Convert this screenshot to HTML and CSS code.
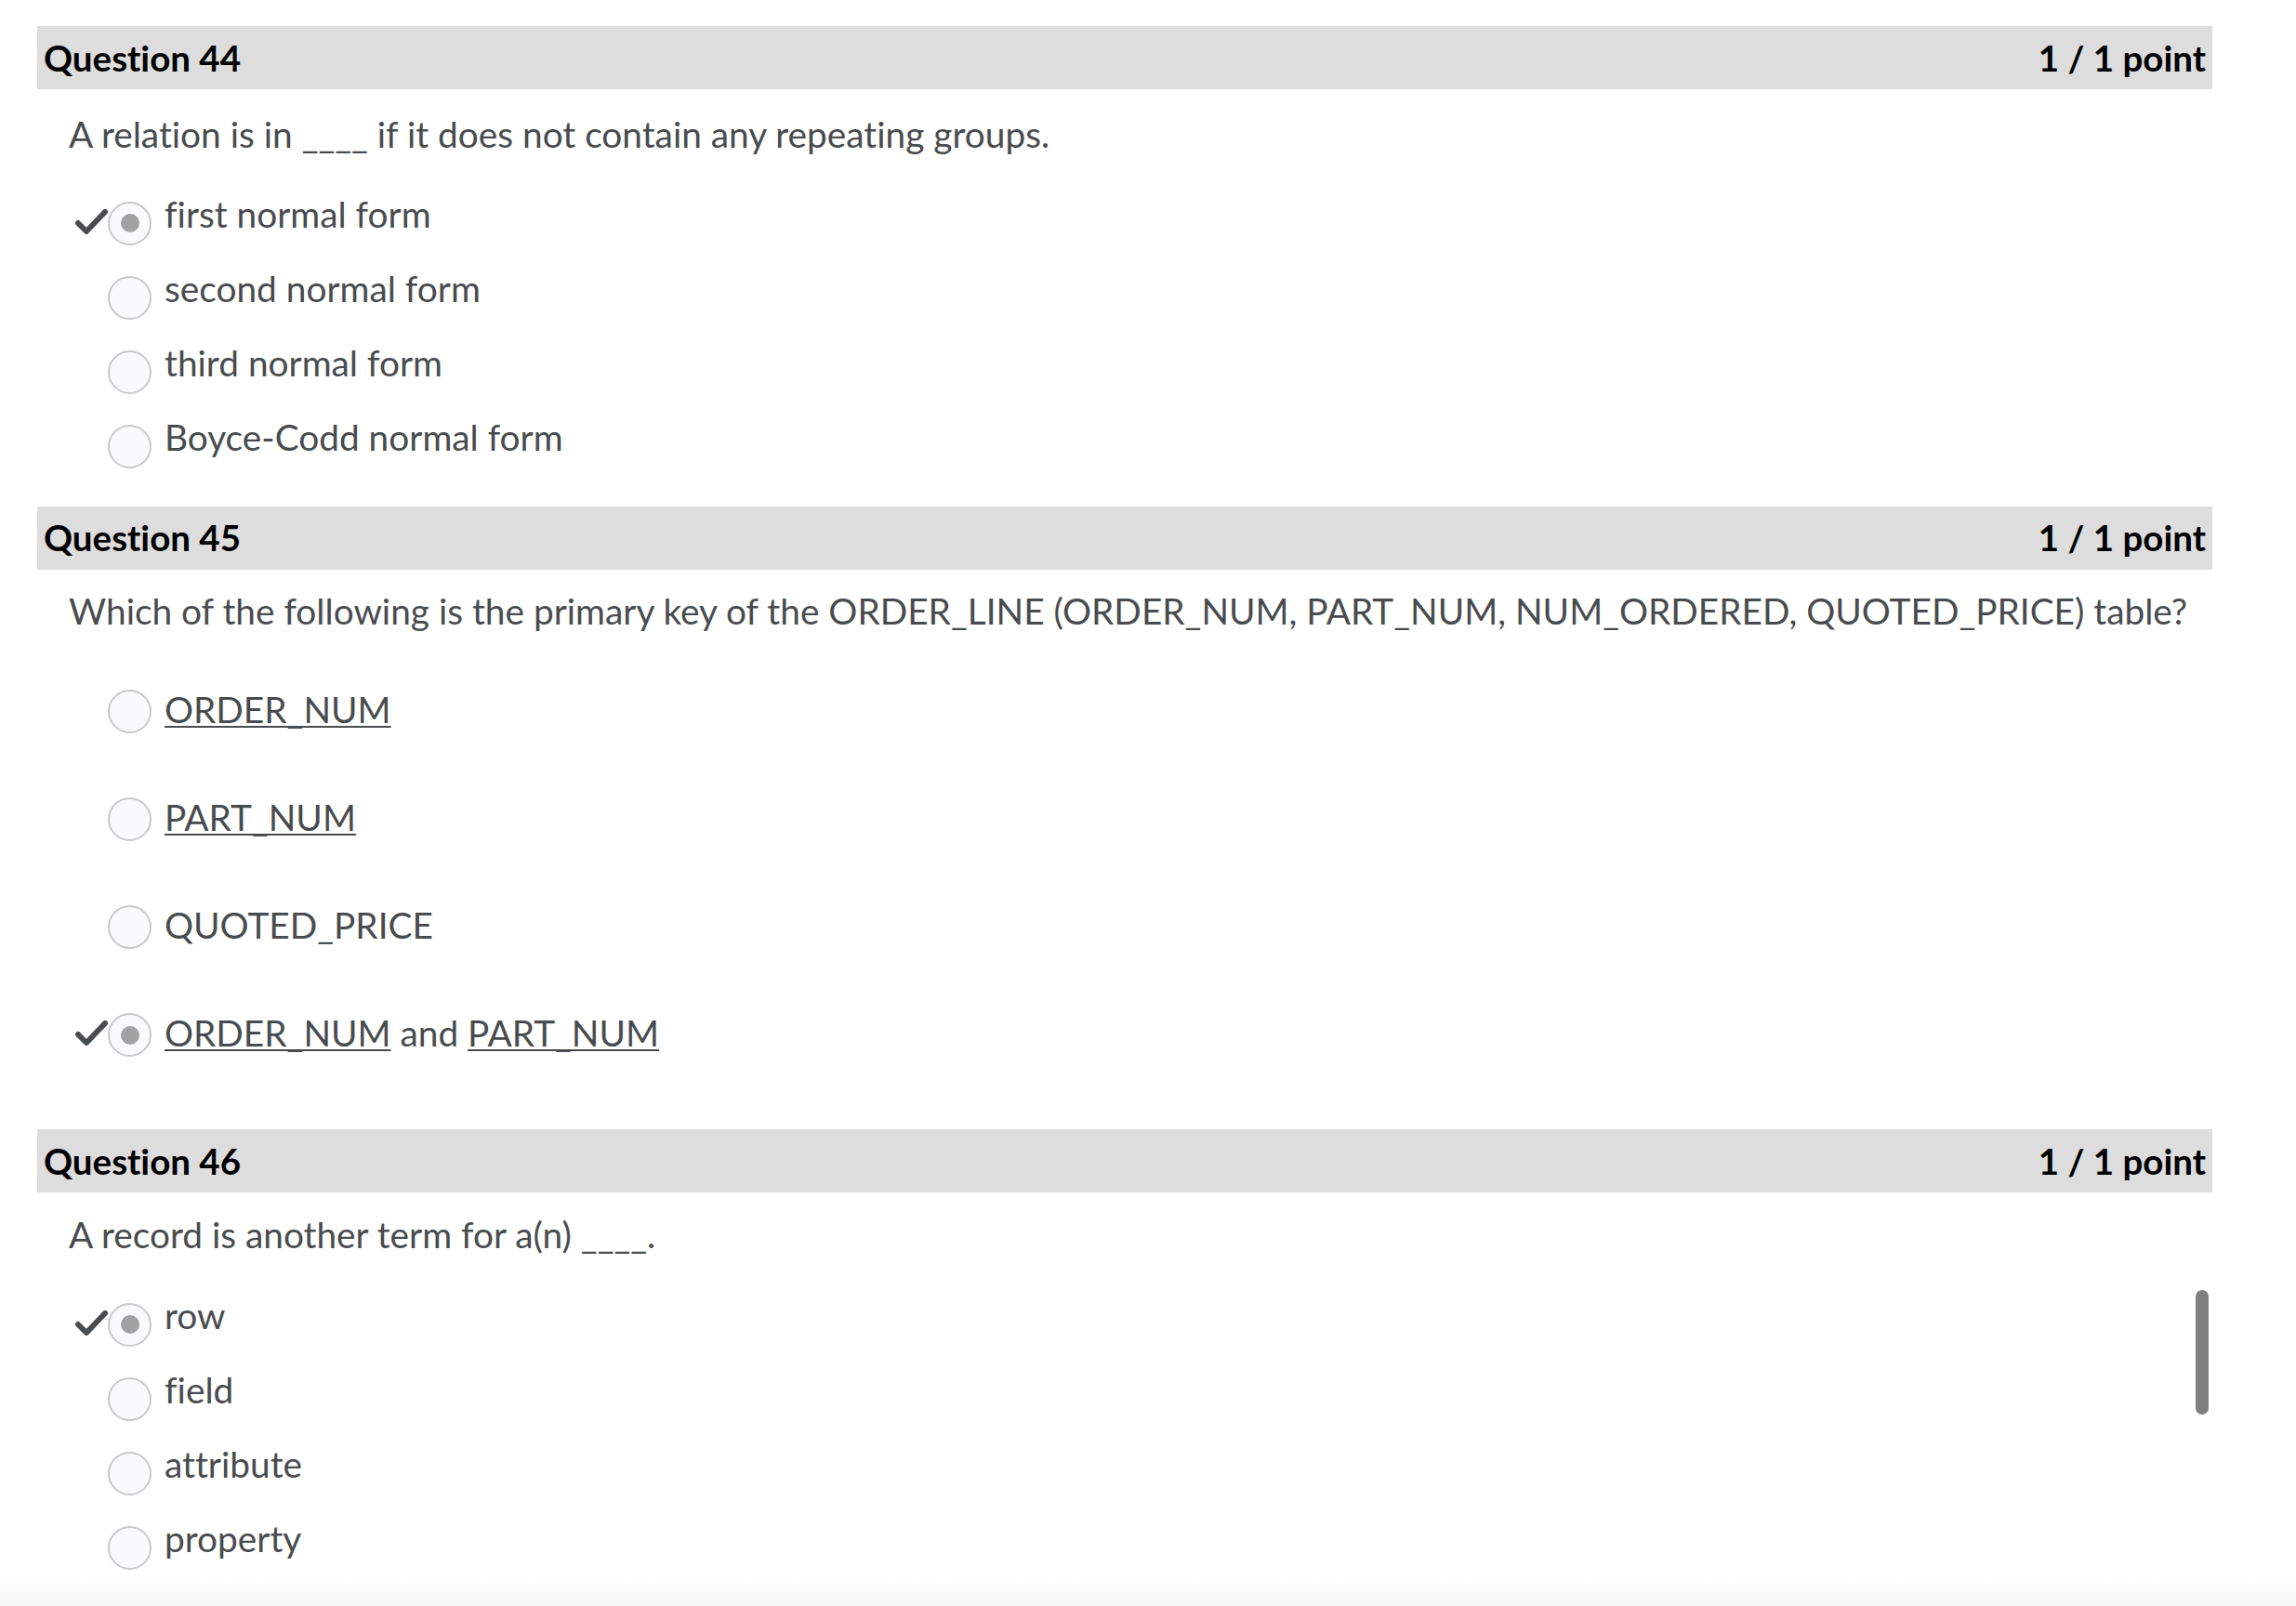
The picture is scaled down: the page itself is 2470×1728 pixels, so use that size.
FILE: index.html
```html
<!DOCTYPE html>
<html lang="en">
<head>
<meta charset="utf-8">
<title>Quiz review</title>
<link rel="stylesheet" href="styles.css">
</head>
<body>
<main class="quiz">
  <section class="question q44">
    <header class="q-head"><h2 class="q-title">Question 44</h2><span class="q-score">1 / 1 point</span></header>
    <p class="q-text">A relation is in ____ if it does not contain any repeating groups.</p>
    <ul class="options">
      <li class="option"><span class="control"><span class="check"><svg viewBox="0 0 36 30" width="36" height="30"><polyline points="4,15 13,24 33,3" /></svg></span><span class="radio selected"></span></span><span class="label">first normal form</span></li>
      <li class="option"><span class="control"><span class="check"></span><span class="radio"></span></span><span class="label">second normal form</span></li>
      <li class="option"><span class="control"><span class="check"></span><span class="radio"></span></span><span class="label">third normal form</span></li>
      <li class="option"><span class="control"><span class="check"></span><span class="radio"></span></span><span class="label">Boyce-Codd normal form</span></li>
    </ul>
  </section>

  <section class="question q45">
    <header class="q-head"><h2 class="q-title">Question 45</h2><span class="q-score">1 / 1 point</span></header>
    <p class="q-text">Which of the following is the primary key of the ORDER_LINE (ORDER_NUM, PART_NUM, NUM_ORDERED, QUOTED_PRICE) table?</p>
    <ul class="options tall">
      <li class="option"><span class="control"><span class="check"></span><span class="radio"></span></span><span class="label"><a class="link" href="#">ORDER_NUM</a></span></li>
      <li class="option"><span class="control"><span class="check"></span><span class="radio"></span></span><span class="label"><a class="link" href="#">PART_NUM</a></span></li>
      <li class="option"><span class="control"><span class="check"></span><span class="radio"></span></span><span class="label">QUOTED_PRICE</span></li>
      <li class="option"><span class="control"><span class="check"><svg viewBox="0 0 36 30" width="36" height="30"><polyline points="4,15 13,24 33,3" /></svg></span><span class="radio selected"></span></span><span class="label"><a class="link" href="#">ORDER_NUM</a> and <a class="link" href="#">PART_NUM</a></span></li>
    </ul>
  </section>

  <section class="question q46">
    <header class="q-head"><h2 class="q-title">Question 46</h2><span class="q-score">1 / 1 point</span></header>
    <p class="q-text">A record is another term for a(n) ____.</p>
    <ul class="options">
      <li class="option"><span class="control"><span class="check"><svg viewBox="0 0 36 30" width="36" height="30"><polyline points="4,15 13,24 33,3" /></svg></span><span class="radio selected"></span></span><span class="label">row</span></li>
      <li class="option"><span class="control"><span class="check"></span><span class="radio"></span></span><span class="label">field</span></li>
      <li class="option"><span class="control"><span class="check"></span><span class="radio"></span></span><span class="label">attribute</span></li>
      <li class="option"><span class="control"><span class="check"></span><span class="radio"></span></span><span class="label">property</span></li>
    </ul>
  </section>
</main>
<div class="scroll-thumb"></div>
<div class="bottom-fade"></div>
</body>
</html>
```

FILE: styles.css
```css
html, body {
  margin: 0;
  padding: 0;
  overflow: hidden;
  background: #ffffff;
}

body {
  font-family: Lato, "Open Sans", "Liberation Sans", sans-serif;
  font-variant-ligatures: none;
  color: #494c4e;
  height: 1728px;
}

.quiz {
  width: 2340px;
  margin-left: 40px;
  padding-top: 28px;
}

.q-head {
  display: flex;
  align-items: center;
  justify-content: space-between;
  height: 68px;
  padding: 0 7px;
  background: #dddddd;
  color: #000000;
  font-weight: 700;
  font-size: 38.5px;
  line-height: 1.2;
}

.q-title {
  margin: 0;
  font-size: inherit;
  font-weight: inherit;
}

.q-text {
  margin: 22px 0 0 34px;
  font-size: 38.8px;
  line-height: 1.2;
}

.q44 .q-text {
  margin-top: 25px;
}

.options {
  list-style: none;
  margin: 42px 0 0 0;
  padding: 0 0 0 40px;
}

.q44 .options {
  margin-top: 39px;
}

.q46 .options {
  margin-top: 40px;
}

.option {
  display: flex;
  align-items: flex-start;
  height: 80px;
  font-size: 38.8px;
  line-height: 1.2;
}

.control {
  display: flex;
  align-items: flex-start;
  margin-top: 10px;
}

.check {
  width: 36px;
  height: 30px;
  margin-top: 8px;
}

.check svg {
  display: block;
}

.check polyline {
  fill: none;
  stroke: #494c4e;
  stroke-width: 6;
  stroke-linecap: round;
  stroke-linejoin: round;
}

.radio {
  box-sizing: border-box;
  width: 47px;
  height: 47px;
  border: 2px solid #c9c9c9;
  border-radius: 50%;
  background: #f9fafb;
  display: flex;
  align-items: center;
  justify-content: center;
}

.radio.selected::after {
  content: "";
  width: 20px;
  height: 20px;
  border-radius: 50%;
  background: #a2a2a2;
}

.label {
  margin-left: 14px;
}

.link {
  color: #494c4e;
  text-decoration: underline;
  text-decoration-thickness: 2px;
  text-underline-offset: 3px;
}

.q44 {
  margin-bottom: 18px;
}

.q45 {
  margin-bottom: 9px;
}

.q45 .q-text {
  margin-top: 21px;
}

.options.tall {
  margin-top: 62px;
}

.options.tall .option {
  height: 116px;
}

.options.tall .control {
  margin-top: 0;
}

.options.tall .label {
  margin-top: -2px;
}

.scroll-thumb {
  position: fixed;
  left: 2362px;
  top: 1388px;
  width: 14px;
  height: 134px;
  border-radius: 7px;
  background: #7f7f7f;
}

.bottom-fade {
  position: fixed;
  left: 0;
  right: 0;
  bottom: 0;
  height: 25px;
  background: linear-gradient(#fdfdfd, #f5f5f5);
}
```
